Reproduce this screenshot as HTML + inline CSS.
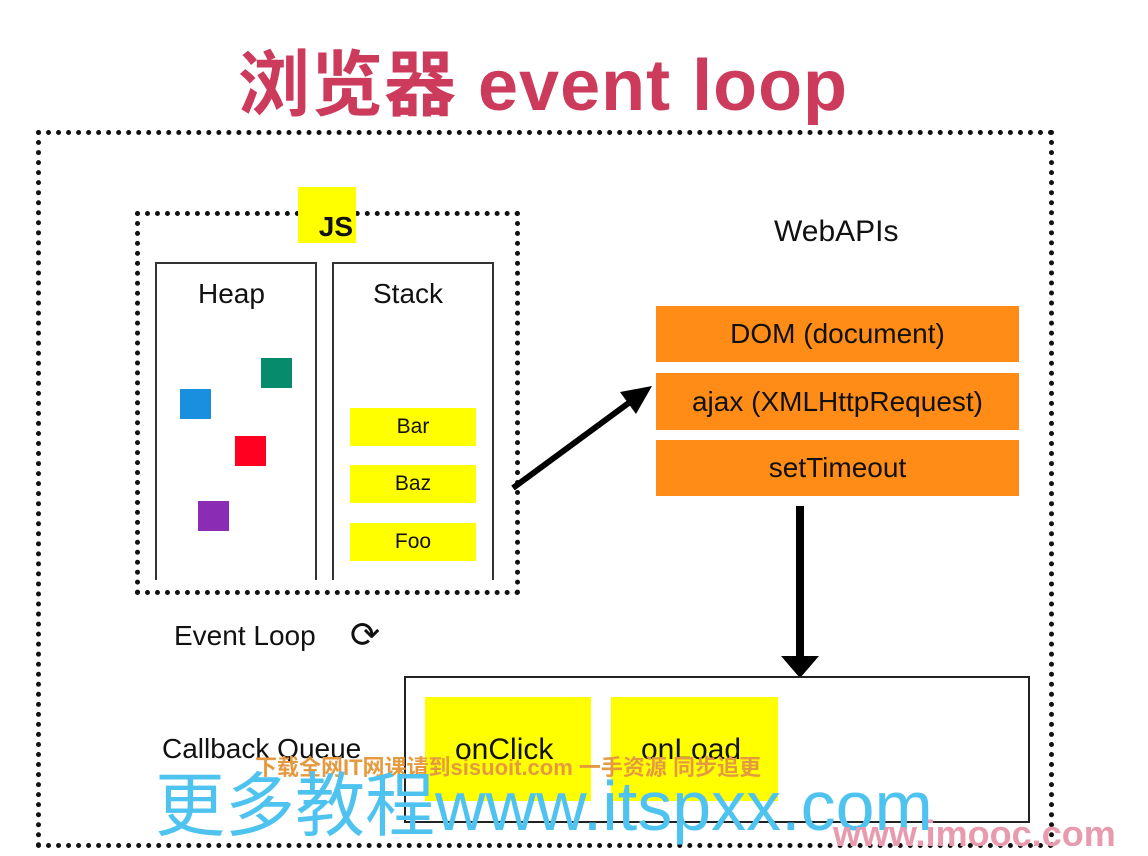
<!DOCTYPE html>
<html><head><meta charset="utf-8"><style>
body{margin:0;width:1148px;height:856px;background:#fff;position:relative;overflow:hidden;font-family:"Liberation Sans","Noto Sans CJK SC",sans-serif}
div{position:absolute;box-sizing:border-box}
.t{color:#111;white-space:nowrap}
.dot{border:5px dotted #111}
.or{background:#ff8c17;color:#111;font-size:28px;text-align:center;left:656px;width:363px}
.y{background:#ffff00;text-align:center;color:#111}
</style></head><body>
<div class="t" style="left:238px;top:26px;font-size:72px;font-weight:bold;color:#cc3a5c;letter-spacing:1px">浏览器 event loop</div>
<div class="dot" style="left:36px;top:130px;width:1018px;height:718px"></div>
<div class="dot" style="left:135px;top:211px;width:385px;height:384px"></div>
<div class="y" style="left:298px;top:187px;width:58px;height:56px;font-weight:bold;font-size:28px;line-height:80px;text-align:right;padding-right:3px">JS</div>
<div style="left:155px;top:262px;width:162px;height:318px;border:2px solid #333;border-bottom:none"></div>
<div style="left:332px;top:262px;width:162px;height:318px;border:2px solid #333;border-bottom:none"></div>
<div class="t" style="left:198px;top:278px;font-size:28px">Heap</div>
<div class="t" style="left:373px;top:278px;font-size:28px">Stack</div>
<div style="left:180px;top:389px;width:31px;height:30px;background:#1a8fe0"></div>
<div style="left:261px;top:358px;width:31px;height:30px;background:#068c6c"></div>
<div style="left:235px;top:436px;width:31px;height:30px;background:#ff0020"></div>
<div style="left:198px;top:501px;width:31px;height:30px;background:#8b2cb4"></div>
<div class="y" style="left:350px;top:408px;width:126px;height:38px;font-size:21px;line-height:38px">Bar</div>
<div class="y" style="left:350px;top:465px;width:126px;height:38px;font-size:21px;line-height:38px">Baz</div>
<div class="y" style="left:350px;top:523px;width:126px;height:38px;font-size:21px;line-height:38px">Foo</div>
<div class="t" style="left:174px;top:620px;font-size:28px">Event Loop</div>
<div class="t" style="left:350px;top:614px;font-size:36px">⟳</div>
<div class="t" style="left:774px;top:215px;font-size:30px">WebAPIs</div>
<div class="or" style="top:306px;height:56px;line-height:56px">DOM (document)</div>
<div class="or" style="top:373px;height:57px;line-height:57px">ajax (XMLHttpRequest)</div>
<div class="or" style="top:440px;height:56px;line-height:56px">setTimeout</div>
<svg style="position:absolute;left:0;top:0" width="1148" height="856">
<line x1="513" y1="488" x2="630" y2="402" stroke="#000" stroke-width="6"/>
<polygon points="652,386 620,392 636,414" fill="#000"/>
<line x1="800" y1="506" x2="800" y2="658" stroke="#000" stroke-width="8"/>
<polygon points="781,656 819,656 800,678" fill="#000"/>
</svg>
<div style="left:404px;top:676px;width:626px;height:147px;border:2px solid #222"></div>
<div class="y" style="left:425px;top:697px;width:166px;height:104px"></div>
<div class="y" style="left:611px;top:697px;width:167px;height:104px"></div>
<div class="t" style="left:162px;top:733px;font-size:28px">Callback Queue</div>
<div class="t" style="left:455px;top:733px;font-size:30px">onClick</div>
<div class="t" style="left:641px;top:733px;font-size:30px">onLoad</div>
<div class="t" style="left:255px;top:750px;font-size:22px;color:#e59a40;font-weight:bold">下载全网IT网课请到sisuoit.com 一手资源 同步追更</div>
<div class="t" style="left:155px;top:750px;font-size:70px;color:#4fc3f0">更多教程www.itspxx.com</div>
<div class="t" style="left:833px;top:813px;font-size:36px;color:#e89aae;font-weight:bold">www.imooc.com</div>
</body></html>
